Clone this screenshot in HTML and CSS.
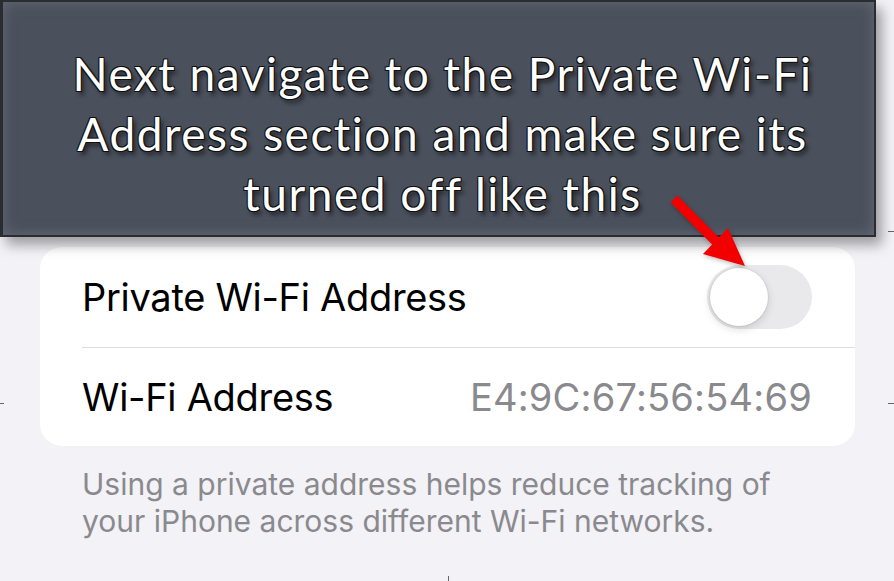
FILE: index.html
```html
<!DOCTYPE html>
<html lang="en">
<head>
    <meta charset="UTF-8">
    <meta name="viewport" content="width=device-width, initial-scale=1.0">
    <title>Private Wi-Fi Address</title>
    <link rel="stylesheet" href="styles.css">
</head>
<body>
    <div class="screen">
        <!-- Instruction callout -->
        <div class="callout">
            <p>Next navigate to the Private Wi-Fi<br>Address section and make sure its<br>turned off like this</p>
        </div>

        <div class="card">
            <div class="row">
                <span class="label">Private Wi-Fi Address</span>
                <span class="toggle"><span class="knob"></span></span>
            </div>
            <div class="row">
                <span class="label">Wi-Fi Address</span>
                <span class="value">E4:9C:67:56:54:69</span>
            </div>
        </div>

        <p class="footnote">Using a private address helps reduce tracking of<br>your iPhone across different Wi-Fi networks.</p>

        <svg class="arrow" width="100" height="90" viewBox="660 185 100 90">
            <polygon points="677.4,195.4 718.9,237.4 728,228 745,266 703,254 712.1,244.6 670.6,202.6" fill="#f20000"/>
        </svg>

        <span class="mark mark-l1"></span>
        <span class="mark mark-r1"></span>
        <span class="mark mark-l2"></span>
        <span class="mark mark-r2"></span>
        <span class="mark mark-b"></span>
    </div>
</body>
</html>
```

FILE: styles.css
```css
* {
    margin: 0;
    padding: 0;
    box-sizing: border-box;
}

body {
    background-color: #f2f2f7;
    font-family: 'Inter', 'Roboto', sans-serif;
}

.screen {
    position: relative;
    width: 894px;
    height: 581px;
    overflow: hidden;
    background-color: #f2f2f7;
}

/* Callout */
.callout {
    width: 876px;
    height: 237px;
    background-color: #4a505c;
    border: 2px solid #2b2c2f;
    border-left-width: 3px;
    box-shadow: inset 0 0 14px rgba(120, 128, 140, 0.55), 6px 8px 12px rgba(0, 0, 0, 0.35);
    padding: 42px 0 0 8px;
    text-align: center;
    position: relative;
    z-index: 2;
}

.callout p {
    font-family: 'Lato', 'Open Sans', sans-serif;
    font-size: 46px;
    line-height: 60px;
    letter-spacing: 1.5px;
    color: #fff;
    text-shadow: 1px 1px 0 #111, -1px -1px 0 #111, 1px -1px 0 #111, -1px 1px 0 #111, 3px 4px 4px rgba(0, 0, 0, 0.55);
}

/* Settings card */
.card {
    margin: 10px 39px 0 40px;
    background: #fff;
    border-radius: 22px;
    padding-left: 42px;
}

.row {
    height: 100px;
    display: flex;
    align-items: center;
    justify-content: space-between;
    padding-right: 43px;
}

.row + .row {
    border-top: 1px solid #dedee2;
    height: 99px;
}

.label {
    font-size: 38px;
    color: #000;
    letter-spacing: -0.3px;
}

.value {
    font-size: 38px;
    color: #8a8a8e;
    letter-spacing: 0.2px;
}

.toggle {
    width: 105px;
    height: 64px;
    border-radius: 32px;
    background-color: #e9e9eb;
    padding: 3px;
    display: flex;
}

.knob {
    width: 58px;
    height: 58px;
    border-radius: 50%;
    background: #fff;
    box-shadow: 0 3px 8px rgba(0, 0, 0, 0.15), 0 0 0 1px rgba(0, 0, 0, 0.05);
}

.footnote {
    margin: 20px 0 0 82px;
    font-size: 30px;
    line-height: 37px;
    color: #8a8a8e;
}

/* Red pointer arrow */
.arrow {
    position: absolute;
    left: 660px;
    top: 185px;
    z-index: 3;
    filter: drop-shadow(1px 2px 2px rgba(0, 0, 0, 0.25));
}

/* Small crop marks round the edges */
.mark {
    position: absolute;
    background: #666;
}

.mark-l1, .mark-l2 {
    left: 0;
    width: 4px;
    height: 1px;
}

.mark-r1, .mark-r2 {
    right: 0;
    width: 6px;
    height: 1px;
}

.mark-r1 {
    top: 231px;
}

.mark-l1 {
    top: 232px;
}

.mark-l2, .mark-r2 {
    top: 403px;
}

.mark-b {
    left: 448px;
    bottom: 0;
    width: 1px;
    height: 5px;
}
```
